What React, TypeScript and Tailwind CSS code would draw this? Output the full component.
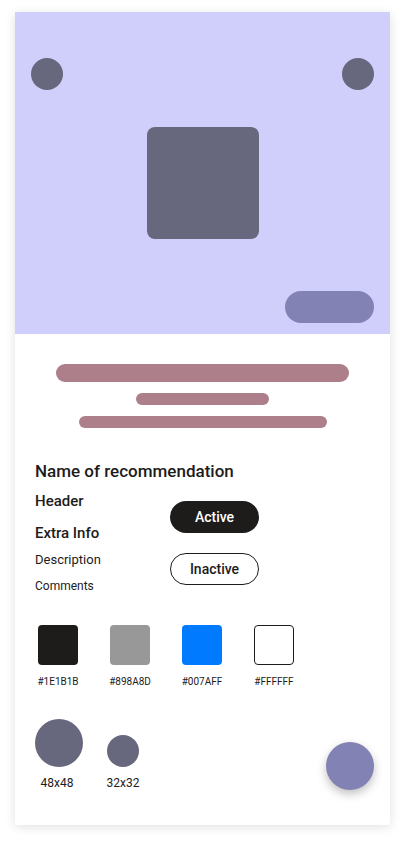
import React from "react";

const swatches = [
  { hex: "#1E1B1B", cls: "bg-[#1e1b1b]" },
  { hex: "#898A8D", cls: "bg-[#989898]" },
  { hex: "#007AFF", cls: "bg-[#007aff]" },
  { hex: "#FFFFFF", cls: "bg-white border border-[#1e1b1b]" },
];

export default function App() {
  return (
    <div className="min-h-[842px] bg-white pt-[12px] font-['Roboto',sans-serif] text-[#1e1b1b]">
      <div className="mx-[15px] w-[375px] bg-white shadow-[0_2px_10px_rgba(0,0,0,0.12)]">
        {/* hero */}
        <div className="flex h-[322px] flex-col bg-[#d0cefa] px-4 pt-[46px]">
          <div className="flex justify-between">
            <div className="h-8 w-8 rounded-full bg-[#67677e]" />
            <div className="h-8 w-8 rounded-full bg-[#67677e]" />
          </div>
          <div className="mt-[37px] flex justify-center">
            <div className="h-[112px] w-[112px] rounded-lg bg-[#67677e]" />
          </div>
          <div className="mt-[52px] flex justify-end">
            <div className="h-8 w-[89px] rounded-full bg-[#8282b4]" />
          </div>
        </div>

        {/* placeholder lines */}
        <div className="flex flex-col items-center gap-[11px] pt-[30px]">
          <div className="h-[18px] w-[293px] rounded-full bg-[#ad7f8a]" />
          <div className="h-3 w-[133px] rounded-full bg-[#ad7f8a]" />
          <div className="h-3 w-[248px] rounded-full bg-[#ad7f8a]" />
        </div>

        {/* info */}
        <div className="px-5 pt-[31px]">
          <div className="text-[17px] leading-6 font-medium">Name of recommendation</div>
          <div className="mt-2 flex">
            <div className="w-[135px]">
              <div className="text-[15px] leading-5 font-medium">Header</div>
              <div className="mt-3 text-[15px] leading-5 font-medium">Extra Info</div>
              <div className="mt-[7px] text-[13px] leading-5">Description</div>
              <div className="mt-2 text-[12px] leading-4">Comments</div>
            </div>
            <div className="flex flex-col gap-5 pt-[10px]">
              <button className="h-8 w-[89px] rounded-full bg-[#1e1b1b] text-[14px] font-medium text-white">
                Active
              </button>
              <button className="h-8 w-[89px] rounded-full border-[1.5px] border-[#1e1b1b] bg-white text-[14px] font-medium text-[#1e1b1b]">
                Inactive
              </button>
            </div>
          </div>
        </div>

        {/* colours */}
        <div className="flex gap-8 pt-[31px] pl-[23px]">
          {swatches.map((s) => (
            <div key={s.hex} className="flex w-10 flex-col items-center">
              <div className={`h-10 w-10 rounded ${s.cls}`} />
              <div className="mt-[10px] text-[10px] leading-[14px] whitespace-nowrap">{s.hex}</div>
            </div>
          ))}
        </div>

        {/* avatars + fab */}
        <div className="flex items-end justify-between pt-[30px] pr-4 pb-[34px] pl-5">
          <div className="flex items-end gap-6">
            <div className="flex w-12 flex-col items-center">
              <div className="h-12 w-12 rounded-full bg-[#67677e]" />
              <div className="mt-2 pr-1 text-[12px] leading-4">48x48</div>
            </div>
            <div className="flex w-8 flex-col items-center">
              <div className="h-8 w-8 rounded-full bg-[#67677e]" />
              <div className="mt-2 text-[12px] leading-4">32x32</div>
            </div>
          </div>
          <div className="mb-px h-12 w-12 rounded-full bg-[#8282b4] shadow-[0_4px_10px_rgba(0,0,0,0.25)]" />
        </div>
      </div>
    </div>
  );
}
